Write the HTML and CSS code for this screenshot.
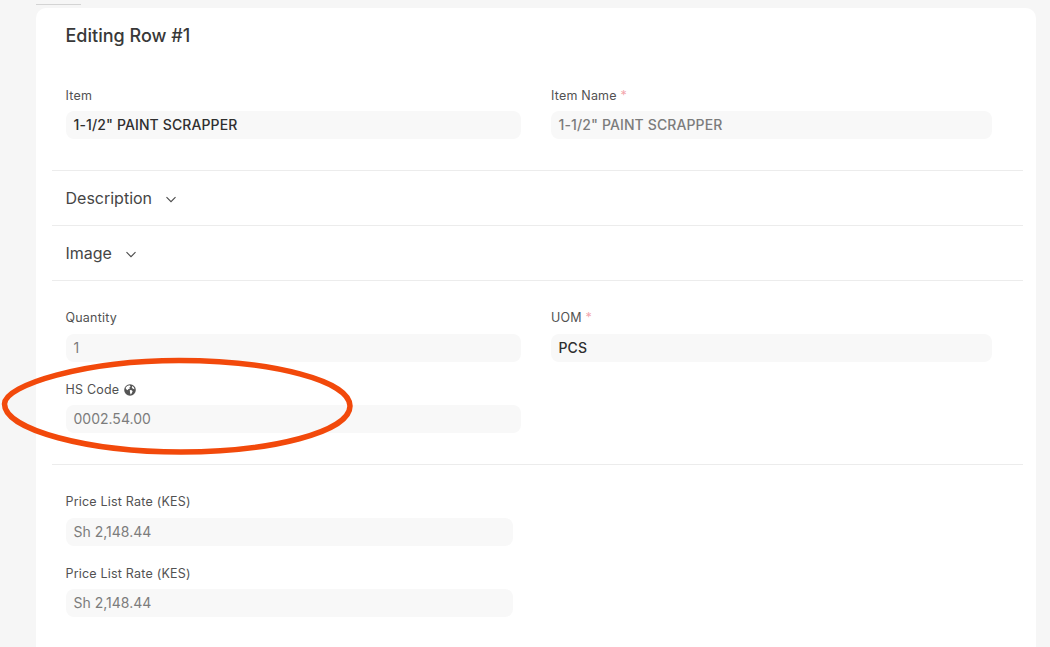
FILE: index.html
```html
<!DOCTYPE html>
<html lang="en">
<head>
<meta charset="utf-8">
<title>Editing Row #1</title>
<link rel="stylesheet" href="styles.css">
</head>
<body>
<div class="page">
  <div class="tab-strip"><span class="tab-line"></span></div>
  <main class="card">
    <section class="section section-head">
      <h1 class="title">Editing Row #1</h1>
      <div class="grid">
        <div class="field"><label class="label">Item</label><div class="input strong">1-1/2" PAINT SCRAPPER</div></div>
        <div class="field field-right"><label class="label">Item Name <span class="req">*</span></label><div class="input medium">1-1/2" PAINT SCRAPPER</div></div>
      </div>
    </section>
    <section class="section collapse"><span class="collapse-title">Description</span><svg class="chev" width="12" height="7" viewBox="0 0 12 7"><path d="M1.500 1.200 6 5.700l4.500-4.500"/></svg></section>
    <section class="section collapse"><span class="collapse-title">Image</span><svg class="chev" width="12" height="7" viewBox="0 0 12 7"><path d="M1.500 1.200 6 5.700l4.500-4.500"/></svg></section>
    <section class="section section-qty">
      <div class="grid">
        <div class="field"><label class="label">Quantity</label><div class="input muted">1</div></div>
        <div class="field field-right"><label class="label">UOM <span class="req">*</span></label><div class="input strong">PCS</div></div>
        <div class="field field-shift"><label class="label">HS Code <svg class="globe" width="12" height="12" viewBox="0 0 12 12"><circle cx="6" cy="6" r="5.8" fill="#555"/><path d="M3.200 2 5.600 1.300 6.600 2.400 5.400 3.600 5.800 4.700 4.400 4.900 3.800 6.200 2.200 5.200 1.600 3.800ZM5.800 6 7.800 6.200 8.600 7.300 7.800 9.200 6.600 10.400 6 8.400ZM8.200 2 9.800 3.200 10.500 5.200 8.900 4.700 7.800 3.500Z" fill="#fff"/></svg></label><div class="input muted">0002.54.00</div></div>
      </div>
    </section>
    <section class="section section-price">
      <div class="stack">
        <div class="field"><label class="label">Price List Rate (KES)</label><div class="input muted">Sh 2,148.44</div></div>
        <div class="field field-shift"><label class="label">Price List Rate (KES)</label><div class="input muted">Sh 2,148.44</div></div>
      </div>
    </section>
  </main>
  <svg class="ring" width="360" height="104" viewBox="0 0 360 104"><path d="M178 6.500C272 6.500 349 27 349 52 349 78 270 98 180 98 88 98 3.500 76 3.500 50 3.500 31 84 6.500 178 6.500Z"/></svg>
</div>
</body>
</html>
```
FILE: styles.css
```css
* { box-sizing: border-box; }
html, body { margin: 0; height: 100%; overflow: hidden; }
body { background: #f6f6f6; font-family: Inter, "Liberation Sans", sans-serif; color: #383838; }
.page { position: relative; height: 647px; padding: 0 14px 0 36px; overflow: hidden; }
.tab-strip { height: 8px; padding-top: 4px; }
.tab-line { display: block; width: 45px; height: 1px; background: #d4d4d4; }
.card { width: 1000px; height: 639px; padding: 0 13px 0 16px; background: #fff; border-radius: 10px 10px 0 0; }
.section { border-bottom: 1px solid #ececec; padding-left: 14px; }
.section-head { height: 163px; padding-top: 16px; }
.title { margin: 0 0 40px -.5px; font-size: 18px; line-height: 24px; font-weight: 500; color: #383838; }
.grid { display: grid; grid-template-columns: 455px 441px; column-gap: 30px; row-gap: 19px; }
.section-head .label { margin-bottom: 7px; }
.stack { display: flex; flex-direction: column; gap: 19px; width: 447px; }
.label { display: block; height: 16px; margin: 0 0 8px -.5px; font-size: 12.5px; line-height: 16px; letter-spacing: .2px; color: #525252; }
.field-right .label { margin-left: 0; }
.field-shift { margin-top: 1px; }
.field-shift .label { margin-bottom: 7px; }
.req { color: #f3a6ac; }
.input { height: 28px; padding: 0 7.5px; background: #f8f8f8; border-radius: 8px; font-size: 14px; line-height: 28px; letter-spacing: .12px; }
.strong { font-weight: 500; color: #2f2f2f; }
.medium { font-weight: 500; color: #7c7c7c; }
.muted { color: #7c7c7c; letter-spacing: 0; }
.collapse { display: flex; align-items: center; height: 55px; }
.collapse-title { margin-left: -.5px; font-size: 16px; color: #454545; }
.chev { margin-left: 13px; margin-top: 3px; fill: none; stroke: #4a4a4a; stroke-width: 1.1; }
.section-qty { height: 184px; padding-top: 29px; }
.section-price { border-bottom: 0; padding-top: 29px; }
.globe { vertical-align: -1.5px; margin-left: 1px; }
.ring { position: absolute; left: 1px; top: 354px; }
.ring path { fill: none; stroke: #f2490b; stroke-width: 5.5; }
```
